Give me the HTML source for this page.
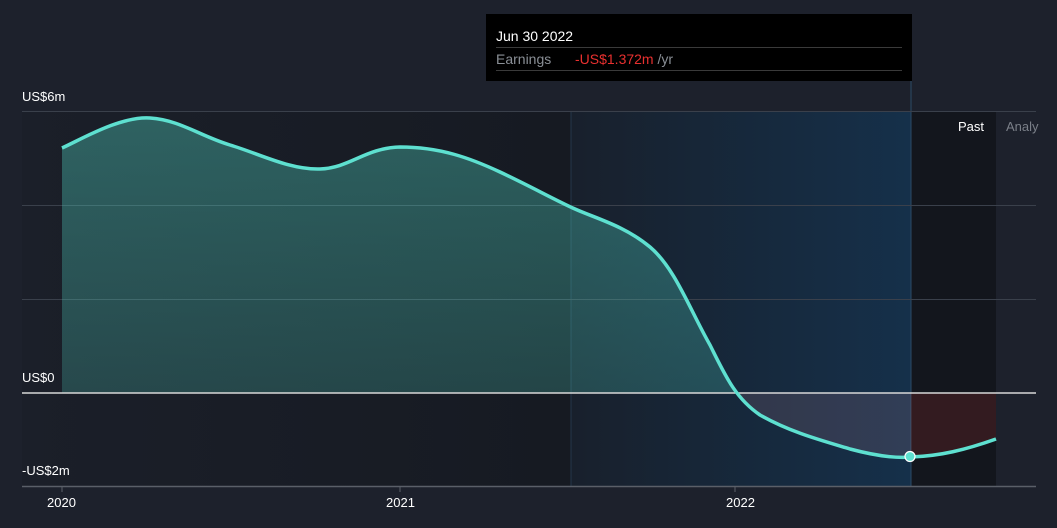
<!DOCTYPE html><html><head><style>
body{margin:0;width:1057px;height:528px;overflow:hidden;background:#1d212c;font-family:"Liberation Sans",sans-serif}
</style></head><body>
<svg width="1057" height="528" viewBox="0 0 1057 528" xmlns="http://www.w3.org/2000/svg" style="position:absolute;left:0;top:0">
<defs>
<linearGradient id="dk" x1="0" x2="1"><stop offset="0" stop-color="#1b1f29"/><stop offset="1" stop-color="#161a22"/></linearGradient>
<linearGradient id="bl" x1="0" x2="1"><stop offset="0" stop-color="#18202c"/><stop offset="1" stop-color="#15304a"/></linearGradient>
<linearGradient id="tf" x1="0" y1="0" x2="0" y2="1"><stop offset="0" stop-color="#4fd1c0" stop-opacity="0.38"/><stop offset="1" stop-color="#4fd1c0" stop-opacity="0.2"/></linearGradient>
<clipPath id="above"><rect x="0" y="0" width="1057" height="393"/></clipPath>
<clipPath id="below1"><rect x="0" y="393" width="911" height="100"/></clipPath>
<clipPath id="below2"><rect x="911" y="393" width="100" height="100"/></clipPath>
</defs>
<rect x="22" y="111" width="549" height="375" fill="url(#dk)"/>
<rect x="571" y="111" width="340" height="375" fill="url(#bl)"/>
<rect x="911" y="111" width="85" height="375" fill="#13161d"/>
<line x1="571" y1="111" x2="571" y2="486" stroke="#24364a" stroke-width="1"/>
<line x1="911" y1="80" x2="911" y2="486" stroke="#2b4a66" stroke-width="1"/>
<g stroke="#3a404b" stroke-width="1"><line x1="22" y1="111.5" x2="1036" y2="111.5"/><line x1="22" y1="205.5" x2="1036" y2="205.5"/><line x1="22" y1="299.5" x2="1036" y2="299.5"/></g>
<path d="M62,148 C80,140 120,116 150,118 C180,120 200,136 230,145 C260,154 290,170 320,169 C350,168 365,148 400,147 C440,147 470,158 500,172 C530,186 555,200 575,209 C595,218 625,226 650,247 C675,268 690,310 710,345 C725,375 735,398 760,415 C790,432 820,440 850,449 C880,457 900,458 911,457 C940,456 965,450 996,439 L996,393 L62,393 Z" fill="url(#tf)" clip-path="url(#above)"/>
<path d="M62,148 C80,140 120,116 150,118 C180,120 200,136 230,145 C260,154 290,170 320,169 C350,168 365,148 400,147 C440,147 470,158 500,172 C530,186 555,200 575,209 C595,218 625,226 650,247 C675,268 690,310 710,345 C725,375 735,398 760,415 C790,432 820,440 850,449 C880,457 900,458 911,457 C940,456 965,450 996,439 L996,393 L62,393 Z" fill="#c98a9a" fill-opacity="0.16" clip-path="url(#below1)"/>
<path d="M62,148 C80,140 120,116 150,118 C180,120 200,136 230,145 C260,154 290,170 320,169 C350,168 365,148 400,147 C440,147 470,158 500,172 C530,186 555,200 575,209 C595,218 625,226 650,247 C675,268 690,310 710,345 C725,375 735,398 760,415 C790,432 820,440 850,449 C880,457 900,458 911,457 C940,456 965,450 996,439 L996,393 L62,393 Z" fill="#8a2a2a" fill-opacity="0.28" clip-path="url(#below2)"/>
<line x1="22" y1="393" x2="1036" y2="393" stroke="#d8d8d8" stroke-width="1.5"/>
<line x1="22" y1="486.5" x2="1036" y2="486.5" stroke="#5a5f68" stroke-width="1.5"/>
<g stroke="#5a5f68"><line x1="62" y1="486" x2="62" y2="492"/><line x1="400" y1="486" x2="400" y2="492"/><line x1="735" y1="486" x2="735" y2="492"/></g>
<path d="M62,148 C80,140 120,116 150,118 C180,120 200,136 230,145 C260,154 290,170 320,169 C350,168 365,148 400,147 C440,147 470,158 500,172 C530,186 555,200 575,209 C595,218 625,226 650,247 C675,268 690,310 710,345 C725,375 735,398 760,415 C790,432 820,440 850,449 C880,457 900,458 911,457 C940,456 965,450 996,439" fill="none" stroke="#5ee0d0" stroke-width="3.5"/>
<circle cx="910" cy="456.5" r="5" fill="#5ee0d0" stroke="#fff" stroke-width="1.2"/>
<g fill="#fff" font-size="13"><text x="22" y="101">US$6m</text><text x="22" y="382">US$0</text><text x="22" y="475">-US$2m</text>
<text x="47" y="507">2020</text><text x="386" y="507">2021</text><text x="726" y="507">2022</text>
<text x="958" y="131">Past</text></g>
<text x="1006" y="131" fill="#7a7f88" font-size="13">Analy</text>
<rect x="486" y="14" width="426" height="67" fill="#000"/>
<text x="496" y="41" fill="#fff" font-size="14">Jun 30 2022</text>
<line x1="496" y1="47.5" x2="902" y2="47.5" stroke="#3a3a3a"/>
<text x="496" y="64" fill="#8a8f96" font-size="14">Earnings</text>
<text x="575" y="64" fill="#e8302f" font-size="14">-US$1.372m <tspan fill="#8a8f96">/yr</tspan></text>
<line x1="496" y1="70.5" x2="902" y2="70.5" stroke="#3a3a3a"/>
</svg>
</body></html>
